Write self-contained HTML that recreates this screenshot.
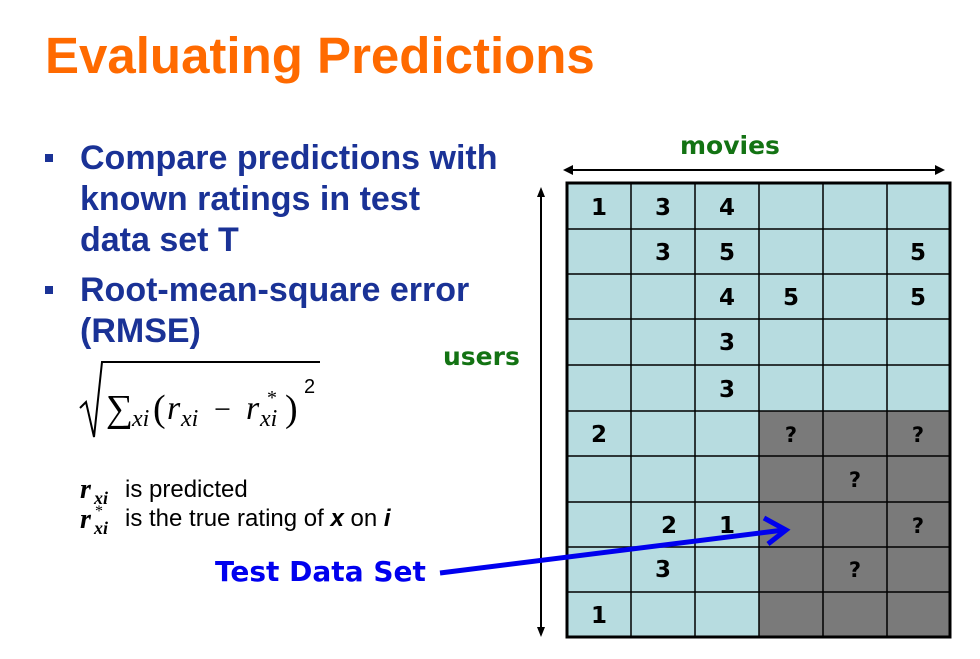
<!DOCTYPE html>
<html><head><meta charset="utf-8"><style>
body{margin:0;width:980px;height:659px;background:#fff;position:relative;overflow:hidden;font-family:"Liberation Sans",sans-serif}
.t{position:absolute;left:45px;top:26px;font-size:51px;font-weight:bold;color:#ff6a00;white-space:nowrap}
.b{position:absolute;left:80px;font-size:34px;font-weight:bold;color:#1a3296;line-height:41px;white-space:nowrap}
.sq{position:absolute;left:45px;width:8px;height:8px;background:#1a3296}
</style></head><body>
<div class="t">Evaluating Predictions</div>
<div class="sq" style="top:154px"></div>
<div class="b" style="top:138px">Compare predictions with<br>known ratings in test<br>data set T</div>
<div class="sq" style="top:286px"></div>
<div class="b" style="top:270px">Root-mean-square error<br>(RMSE)</div>
<svg style="position:absolute;left:0;top:0" width="980" height="659">
<path d="M80 408 L86 402 L94 437 L102 362 L320 362" fill="none" stroke="#000" stroke-width="2"/>
<g font-family="Liberation Serif,serif">
<text x="106" y="421" font-size="38">∑</text>
<text x="132" y="426" font-style="italic" font-size="24">xi</text>
<text x="153" y="421" font-size="38">(</text>
<text x="167" y="419" font-style="italic" font-size="34">r</text>
<text x="181" y="426" font-style="italic" font-size="24">xi</text>
<text x="214" y="419" font-size="30">−</text>
<text x="246" y="419" font-style="italic" font-size="34">r</text>
<text x="267" y="404" font-size="20">*</text>
<text x="260" y="426" font-style="italic" font-size="24">xi</text>
<text x="285" y="421" font-size="38">)</text>
<text x="304" y="393" font-family="Liberation Sans,sans-serif" font-size="20">2</text>
<text x="80" y="498" font-style="italic" font-weight="bold" font-size="28">r</text>
<text x="94" y="504" font-style="italic" font-weight="bold" font-size="18">xi</text>
<text x="80" y="528" font-style="italic" font-weight="bold" font-size="28">r</text>
<text x="95" y="516" font-size="16">*</text>
<text x="94" y="534" font-style="italic" font-weight="bold" font-size="18">xi</text>
</g>
<text x="125" y="497" font-family="Liberation Sans,sans-serif" font-size="24">is predicted</text>
<text x="125" y="526" font-family="Liberation Sans,sans-serif" font-size="24">is the true rating of <tspan font-weight="bold" font-style="italic">x</tspan> on <tspan font-weight="bold" font-style="italic">i</tspan></text>
<text x="680" y="154" font-family="DejaVu Sans,sans-serif" font-weight="bold" font-size="25" fill="#137313">movies</text>
<text x="443" y="365" font-family="DejaVu Sans,sans-serif" font-weight="bold" font-size="25" fill="#137313">users</text>
<line x1="568" y1="170" x2="940" y2="170" stroke="#000" stroke-width="2"/>
<path d="M563 170 l10-5 v10z M945 170 l-10-5 v10z" fill="#000"/>
<line x1="541" y1="192" x2="541" y2="632" stroke="#000" stroke-width="2"/>
<path d="M541 187 l-4 10 h8z M541 637 l-4-10 h8z" fill="#000"/>
<rect x="567" y="183" width="383" height="454" fill="#b7dce0"/>
<rect x="759" y="411" width="191" height="226" fill="#7a7a7a"/>
<g stroke="#000" stroke-width="1.5">
<line x1="631" y1="183" x2="631" y2="637"/><line x1="695" y1="183" x2="695" y2="637"/><line x1="759" y1="183" x2="759" y2="637"/><line x1="823" y1="183" x2="823" y2="637"/><line x1="887" y1="183" x2="887" y2="637"/>
<line x1="567" y1="229" x2="950" y2="229"/><line x1="567" y1="274" x2="950" y2="274"/><line x1="567" y1="319" x2="950" y2="319"/><line x1="567" y1="365" x2="950" y2="365"/><line x1="567" y1="411" x2="950" y2="411"/><line x1="567" y1="456" x2="950" y2="456"/><line x1="567" y1="502" x2="950" y2="502"/><line x1="567" y1="547" x2="950" y2="547"/><line x1="567" y1="592" x2="950" y2="592"/>
</g>
<rect x="567" y="183" width="383" height="454" fill="none" stroke="#000" stroke-width="3"/>
<g font-family="DejaVu Sans,sans-serif" font-weight="bold" font-size="23" fill="#000" text-anchor="middle">
<text x="599" y="215">1</text><text x="663" y="215">3</text><text x="727" y="215">4</text>
<text x="663" y="260">3</text><text x="727" y="260">5</text><text x="918" y="260">5</text>
<text x="727" y="305">4</text><text x="791" y="305">5</text><text x="918" y="305">5</text>
<text x="727" y="350">3</text><text x="727" y="397">3</text>
<text x="599" y="442">2</text><text x="791" y="442" font-size="21">?</text><text x="918" y="442" font-size="21">?</text>
<text x="855" y="487" font-size="21">?</text>
<text x="669" y="533">2</text><text x="727" y="533">1</text><text x="918" y="533" font-size="21">?</text>
<text x="663" y="577">3</text><text x="855" y="577" font-size="21">?</text>
<text x="599" y="623">1</text>
</g>
<text x="215" y="581" font-family="DejaVu Sans,sans-serif" font-weight="bold" font-size="28" fill="#0000ee">Test Data Set</text>
<line x1="440" y1="573" x2="784" y2="530" stroke="#0000ee" stroke-width="5"/>
<path d="M764 518 L786 530 L768 544" fill="none" stroke="#0000ee" stroke-width="5"/>
</svg>
</body></html>
